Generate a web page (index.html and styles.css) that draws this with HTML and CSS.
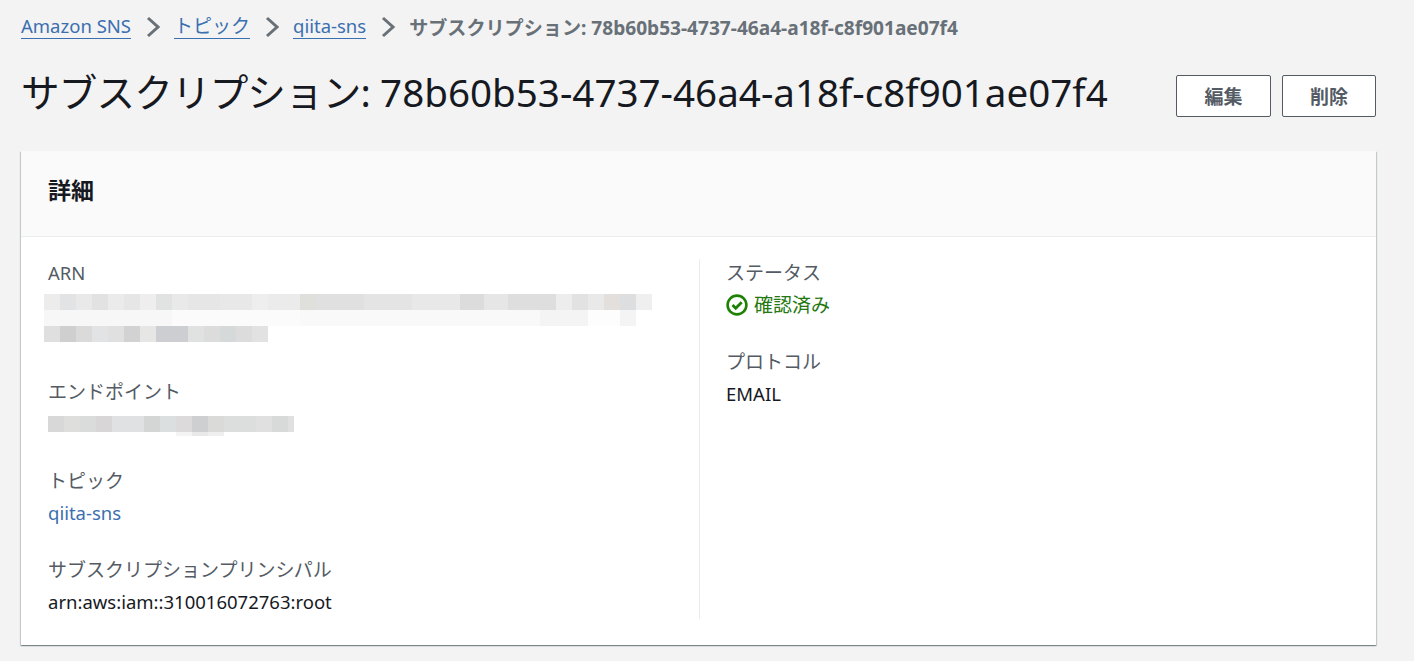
FILE: index.html
```html
<!DOCTYPE html>
<html lang="ja">
<head>
    <meta charset="UTF-8">
    <meta name="viewport" content="width=device-width, initial-scale=1.0">
    <title>サブスクリプション</title>
    <link rel="stylesheet" href="styles.css">
</head>
<body>
    <nav class="breadcrumb">
        <a href="#">Amazon SNS</a>
        <svg class="crumb-arrow" viewBox="0 0 14 22" width="14" height="22"><path d="M2 2l10 9-10 9" fill="none" stroke="#687078" stroke-width="3"/></svg>
        <a class="crumb-ja" href="#">トピック</a>
        <svg class="crumb-arrow" viewBox="0 0 14 22" width="14" height="22"><path d="M2 2l10 9-10 9" fill="none" stroke="#687078" stroke-width="3"/></svg>
        <a href="#">qiita-sns</a>
        <svg class="crumb-arrow" viewBox="0 0 14 22" width="14" height="22"><path d="M2 2l10 9-10 9" fill="none" stroke="#687078" stroke-width="3"/></svg>
        <span class="crumb-current">サブスクリプション: 78b60b53-4737-46a4-a18f-c8f901ae07f4</span>
    </nav>

    <header class="page-header">
        <h1><span class="title-ja">サブスクリプション:</span> 78b60b53-4737-46a4-a18f-c8f901ae07f4</h1>
        <div class="actions">
            <button class="btn btn-edit">編集</button>
            <button class="btn btn-delete">削除</button>
        </div>
    </header>

    <section class="card">
        <div class="card-header"><h2>詳細</h2></div>
        <div class="card-body">
            <div class="col col-left">
                <div class="field field-arn">
                    <div class="label label-latin">ARN</div>
                    <div class="redact redact-arn">
                        <div class="row arn-1"></div>
                        <div class="row arn-2"></div>
                        <div class="row arn-3"></div>
                    </div>
                </div>
                <div class="field field-endpoint">
                    <div class="label">エンドポイント</div>
                    <div class="redact redact-endpoint">
                        <div class="row end-1"></div>
                        <div class="row end-2"></div>
                    </div>
                </div>
                <div class="field field-topic">
                    <div class="label">トピック</div>
                    <a class="value link" href="#">qiita-sns</a>
                </div>
                <div class="field field-principal">
                    <div class="label">サブスクリプションプリンシパル</div>
                    <div class="value">arn:aws:iam::310016072763:root</div>
                </div>
            </div>
            <div class="col col-right">
                <div class="field field-status">
                    <div class="label">ステータス</div>
                    <div class="value status">
                        <svg viewBox="0 0 22 22" width="22" height="22"><circle cx="11" cy="11" r="9.4" fill="none" stroke="#1d8102" stroke-width="2.6"/><path d="M6.5 11l3.2 3.2 6-6" fill="none" stroke="#1d8102" stroke-width="2.8"/></svg>
                        確認済み
                    </div>
                </div>
                <div class="field field-protocol">
                    <div class="label">プロトコル</div>
                    <div class="value">EMAIL</div>
                </div>
            </div>
        </div>
    </section>
</body>
</html>
```

FILE: styles.css
```css
body {
    margin: 0;
    padding: 0 38px 0 21px;
    height: 661px;
    overflow: hidden;
    box-sizing: border-box;
    background-color: #f3f3f3;
    color: #16191f;
    font-family: "Noto Sans", "Noto Sans CJK JP", sans-serif;
    font-size: 18.5px;
}
a {
    color: #3a6fb0;
    text-decoration: none;
}

/* breadcrumb */
.breadcrumb {
    display: flex;
    align-items: center;
    height: 53px;
    font-size: 18.5px;
}
.breadcrumb a {
    border-bottom: 1px solid #3a6fb0;
    line-height: 24px;
}
.breadcrumb .crumb-ja {
    font-size: 19px;
}
.crumb-arrow {
    margin: 0 14.5px;
}
.crumb-current {
    color: #687078;
    font-size: 19.1px;
    font-weight: 700;
}

/* title row */
.page-header {
    display: flex;
    justify-content: space-between;
    align-items: flex-start;
    height: 98px;
}
.page-header h1 {
    margin: 14px 0 0;
    font-size: 38.6px;
    font-weight: 400;
    line-height: 50px;
    white-space: nowrap;
}
.title-ja {
    letter-spacing: -0.85px;
}
.actions {
    display: flex;
    gap: 11px;
    margin-top: 22px;
}
.btn {
    height: 42px;
    background-color: #ffffff;
    border: 1px solid #545b64;
    border-radius: 2px;
    color: #545b64;
    font-family: inherit;
    font-size: 19px;
    font-weight: 700;
    padding: 0;
}
.btn-edit {
    width: 95px;
}
.btn-delete {
    width: 94px;
}

/* card */
.card {
    height: 494px;
    background-color: #ffffff;
    box-shadow: 0 1px 1px 0 rgba(0, 28, 36, 0.3), 1px 1px 1px 0 rgba(0, 28, 36, 0.15), -1px 1px 1px 0 rgba(0, 28, 36, 0.15);
}
.card-header {
    box-sizing: border-box;
    height: 86px;
    padding: 0 27px 10px;
    display: flex;
    align-items: center;
    background-color: #fafafa;
    border-bottom: 1px solid #eaeded;
}
.card-header h2 {
    margin: 0;
    font-size: 23px;
    font-weight: 700;
}
.card-body {
    display: flex;
    padding-top: 22px;
}
.col {
    height: 360px;
    box-sizing: border-box;
}
.col-left {
    width: 679px;
    padding-left: 27px;
    border-right: 1px solid #eaeded;
}
.col-right {
    padding-left: 26px;
}
.label {
    color: #545b64;
    font-size: 19px;
    line-height: 30px;
}
.label-latin {
    font-size: 18.5px;
}
.value {
    line-height: 30px;
    margin-top: 2px;
}
.link {
    display: block;
}
.field-arn,
.field-status {
    margin-top: -1px;
}
.field-endpoint {
    margin-top: 35px;
}
.field-topic {
    margin-top: 30px;
}
.field-principal {
    margin-top: 27px;
}
.field-protocol {
    margin-top: 27px;
}
.status {
    display: flex;
    align-items: center;
    gap: 6px;
    color: #24780f;
    font-size: 19px;
}

/* blurred values */
.redact {
    margin-top: 6px;
}
.redact-arn {
    margin-left: -4px;
}
.redact-endpoint {
    margin-top: 9px;
}
.row {
    height: 16px;
}
.arn-1 {
    width: 608px;
    background: linear-gradient(90deg, #ececec 0 16px, #e2e3e5 16px 32px, #e9e9e9 32px 48px, #e2e2e2 48px 64px, #ebebeb 64px 80px, #e6e6e6 80px 96px, #eeeeee 96px 112px, #e1e2e2 112px 128px, #e9e9e9 128px 144px, #e6e6e6 144px 176px, #e8e8e8 176px 208px, #eeeeee 208px 224px, #ebebeb 224px 256px, #dfdfdc 256px 272px, #e0e0e0 272px 320px, #e4e4e4 320px 368px, #e8e8e8 368px 416px, #dcdcdc 416px 440px, #e6e6e6 440px 464px, #dedede 464px 512px, #ededed 512px 528px, #e2e2e2 528px 544px, #e9e9e9 544px 560px, #e2dfdc 560px 576px, #dcdee0 576px 592px, #efefef 592px 608px);
}
.arn-2 {
    width: 592px;
    background: linear-gradient(90deg, #f7f7f7 0 128px, #fbfbfb 128px 256px, #f9f9f9 256px 496px, #f4f4f4 496px 544px, #fdfdfd 544px 576px, #f4f4f4 576px 592px);
}
.arn-3 {
    width: 224px;
    background: linear-gradient(90deg, #dfdfdf 0 16px, #cfcfcf 16px 32px, #dadada 32px 48px, #e2e3e5 48px 64px, #e0e0e0 64px 80px, #d2d2d2 80px 96px, #e6e6e4 96px 112px, #cdced2 112px 144px, #e0e1e1 144px 160px, #dcdcdc 160px 176px, #d6d9d9 176px 192px, #dcdcdc 192px 208px, #e2e2e2 208px 224px);
}
.end-1 {
    width: 246px;
    background: linear-gradient(90deg, #d8d8d8 0 16px, #dededc 16px 32px, #dadcdc 32px 48px, #d8d6d6 48px 64px, #e0e1e2 64px 96px, #d4d5d5 96px 112px, #dcdfe0 112px 128px, #dcdada 128px 144px, #cdcfd0 144px 160px, #dadad9 160px 176px, #dcdddd 176px 208px, #e0e0e1 208px 224px, #d8d9d9 224px 240px, #e0e0e0 240px 246px);
}
.end-2 {
    height: 4px;
    width: 48px;
    margin-left: 128px;
    background: linear-gradient(90deg, #f4f4f4 0 16px, #e9e9e9 16px 32px, #efefef 32px 48px);
}
```
